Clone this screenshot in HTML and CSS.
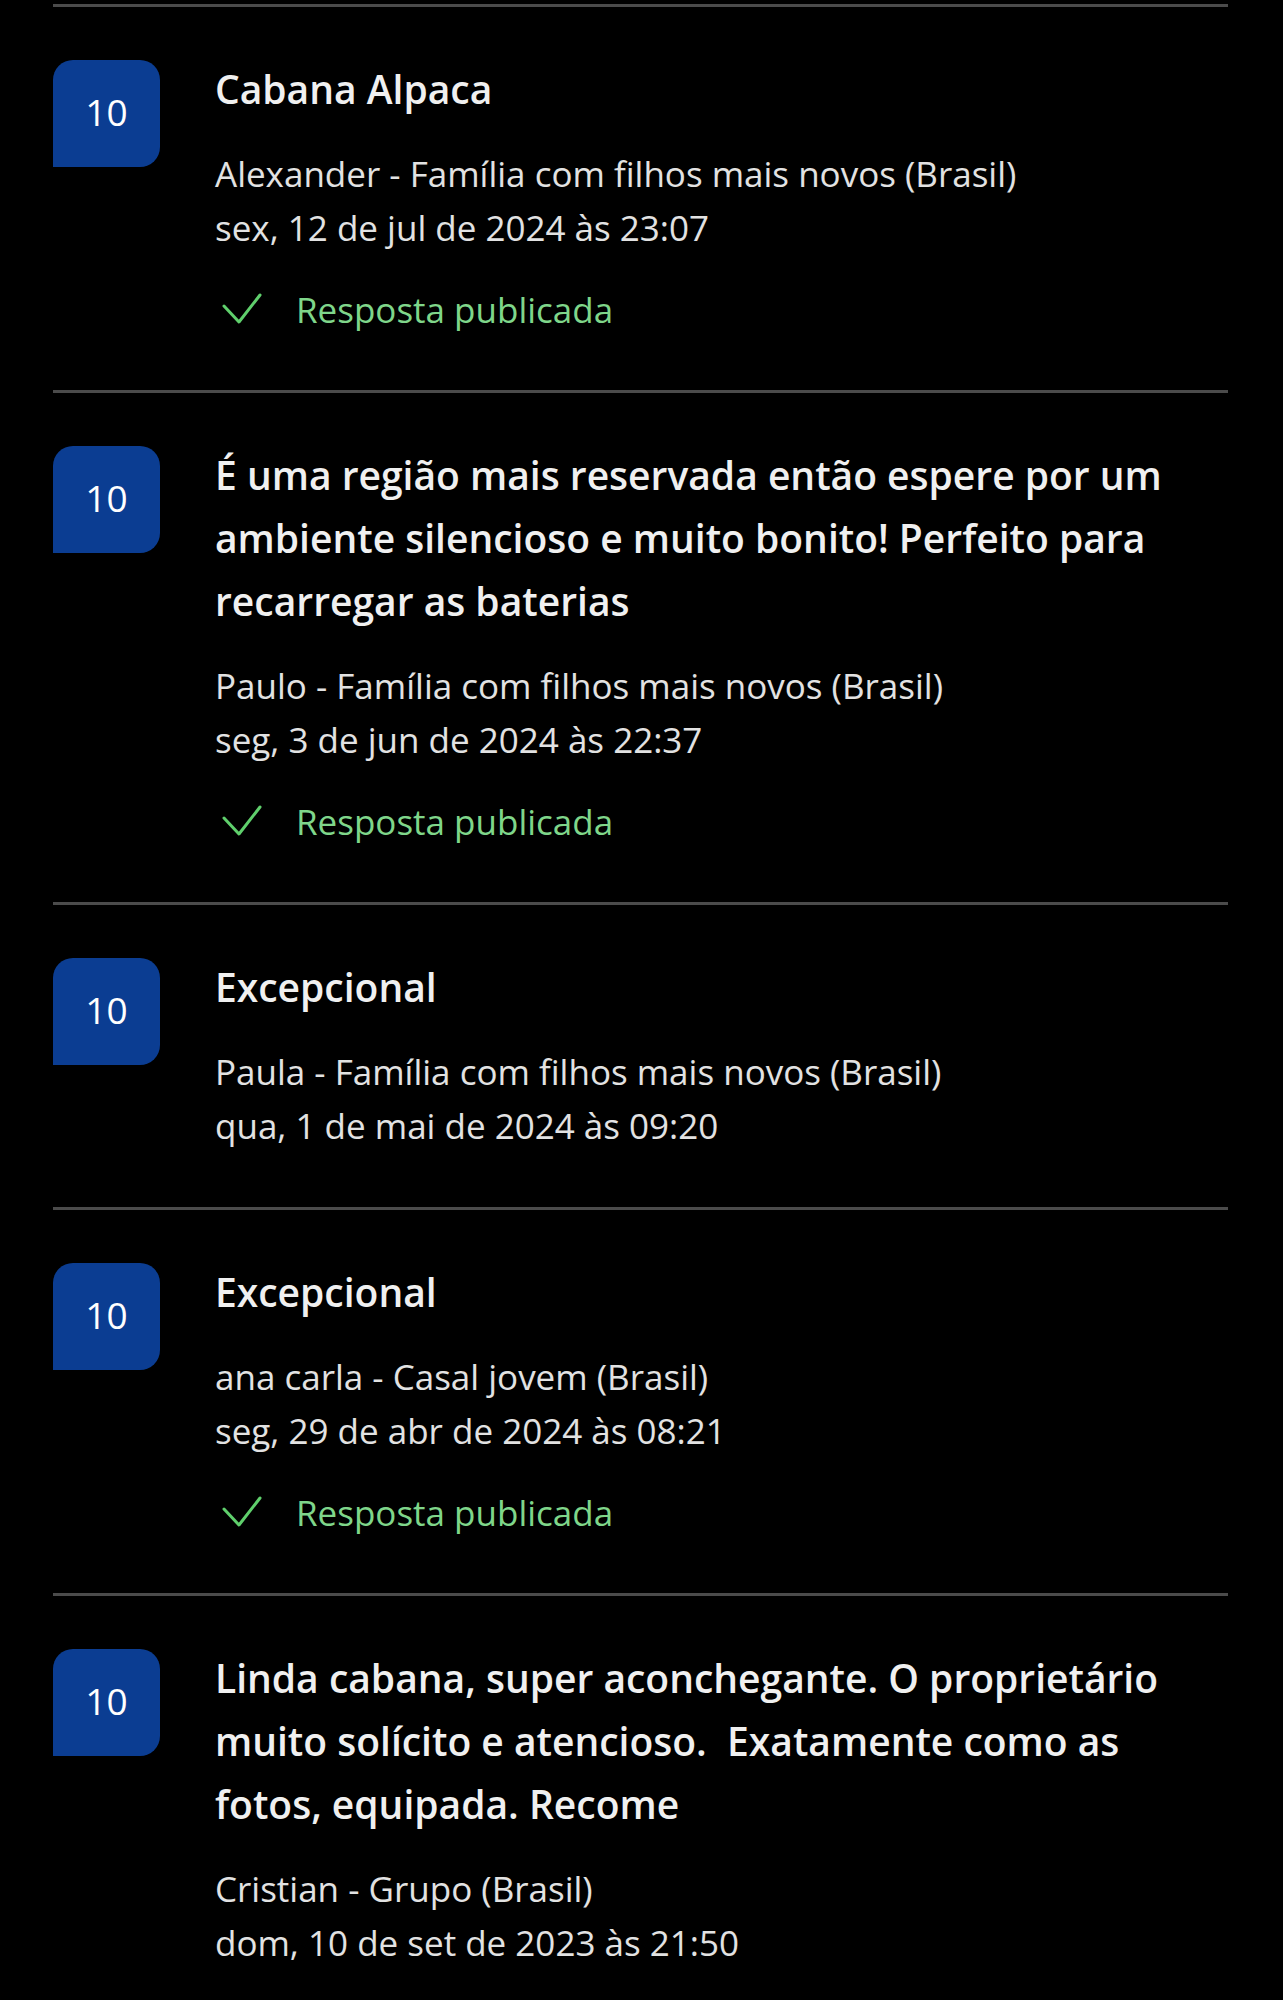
FILE: index.html
```html
<!DOCTYPE html>
<html lang="pt-BR">
<head>
  <meta charset="UTF-8">
  <title>Avaliações dos hóspedes</title>
  <link rel="stylesheet" href="styles.css">
</head>
<body>

  <ul class="review-list">
    <li class="review">
      <div class="score">10</div>
      <div class="review-body">
        <h2 class="review-title">Cabana Alpaca</h2>
        <p class="review-meta">Alexander - Família com filhos mais novos (Brasil)<br>sex, 12 de jul de 2024 às 23:07</p>
        <div class="reply-status">
          <svg class="check" viewBox="0 0 40 32"><path d="M2 13 L17 29 L38 2"/></svg>
          <span>Resposta publicada</span>
        </div>
      </div>
    </li>

    <li class="review">
      <div class="score">10</div>
      <div class="review-body">
        <h2 class="review-title">É uma região mais reservada então espere por um ambiente silencioso e muito bonito! Perfeito para recarregar as baterias</h2>
        <p class="review-meta">Paulo - Família com filhos mais novos (Brasil)<br>seg, 3 de jun de 2024 às 22:37</p>
        <div class="reply-status">
          <svg class="check" viewBox="0 0 40 32"><path d="M2 13 L17 29 L38 2"/></svg>
          <span>Resposta publicada</span>
        </div>
      </div>
    </li>

    <li class="review">
      <div class="score">10</div>
      <div class="review-body">
        <h2 class="review-title">Excepcional</h2>
        <p class="review-meta">Paula - Família com filhos mais novos (Brasil)<br>qua, 1 de mai de 2024 às 09:20</p>
      </div>
    </li>

    <li class="review">
      <div class="score">10</div>
      <div class="review-body">
        <h2 class="review-title">Excepcional</h2>
        <p class="review-meta">ana carla - Casal jovem (Brasil)<br>seg, 29 de abr de 2024 às 08:21</p>
        <div class="reply-status">
          <svg class="check" viewBox="0 0 40 32"><path d="M2 13 L17 29 L38 2"/></svg>
          <span>Resposta publicada</span>
        </div>
      </div>
    </li>

    <li class="review">
      <div class="score">10</div>
      <div class="review-body">
        <h2 class="review-title">Linda cabana, super aconchegante. O proprietário muito solícito e atencioso.&nbsp; Exatamente como as fotos, equipada. Recome</h2>
        <p class="review-meta">Cristian - Grupo (Brasil)<br>dom, 10 de set de 2023 às 21:50</p>
      </div>
    </li>
  </ul>

</body>
</html>
```

FILE: styles.css
```css
* {
  box-sizing: border-box;
}

body {
  margin: 0;
  background: #000;
  color: #f2f2f2;
  font-family: "Open Sans", "Noto Sans", sans-serif;
}

.review-list {
  list-style: none;
  margin: 0 55px 0 53px;
  padding: 4px 0 0;
}

.review {
  display: flex;
  align-items: flex-start;
  gap: 55px;
  border-top: 3px solid #4b4b4b;
  padding: 50px 0 54px;
}

.score {
  flex: 0 0 107px;
  height: 107px;
  margin-top: 3px;
  padding-bottom: 4px;
  background: #0b3d92;
  border-radius: 20px 20px 20px 0;
  color: #fff;
  font-size: 37px;
  display: flex;
  align-items: center;
  justify-content: center;
}

.review-body {
  flex: 1;
  min-width: 0;
}

.review-title {
  margin: 0;
  font-size: 39px;
  font-weight: 600;
  line-height: 63px;
  color: #f0f0f0;
}

.review-meta {
  margin: 27px 0 0;
  font-size: 35px;
  line-height: 54px;
  color: #e2e2e2;
}

.reply-status {
  display: flex;
  align-items: center;
  gap: 34px;
  height: 54px;
  margin-top: 27px;
  font-size: 35px;
  color: #7fd68a;
}

.check {
  width: 40px;
  height: 32px;
  margin-left: 7px;
  fill: none;
  stroke: #5fcf6c;
  stroke-width: 3;
  stroke-linecap: round;
  stroke-linejoin: round;
}
```
